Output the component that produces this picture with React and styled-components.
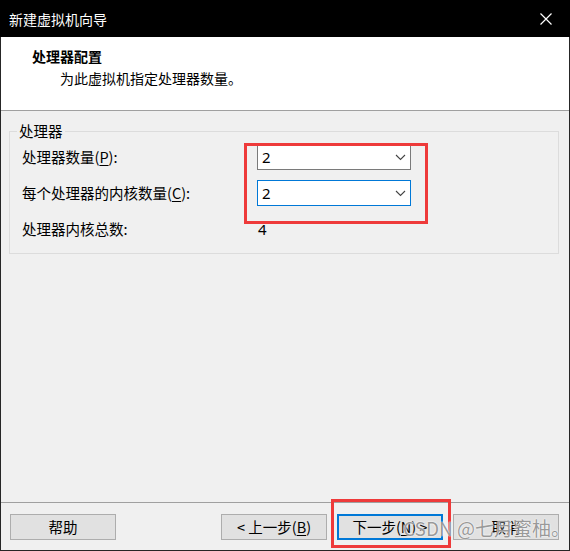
import styled, { createGlobalStyle } from "styled-components";

const GlobalStyle = createGlobalStyle`
  html, body {
    margin: 0;
    padding: 0;
    background: #ffffff;
  }
  * {
    box-sizing: border-box;
  }
`;

const Chevron = () => (
  <svg width="11" height="7" viewBox="0 0 11 7">
    <polyline points="1,1 5.5,5.5 10,1" fill="none" stroke="#444" strokeWidth="1.1" />
  </svg>
);

const CloseIcon = () => (
  <svg width="12" height="12" viewBox="0 0 12 12">
    <path d="M0.5 0.5 L11.5 11.5 M11.5 0.5 L0.5 11.5" stroke="#fff" strokeWidth="1.2" />
  </svg>
);

const Combo = ({ value, focused }) => (
  <ComboBox focused={focused}>
    <span>{value}</span>
    <Chevron />
  </ComboBox>
);

const App = () => {
  return (
    <Frame>
      <GlobalStyle />
      <TitleBar>
        <span>新建虚拟机向导</span>
        <CloseButton>
          <CloseIcon />
        </CloseButton>
      </TitleBar>
      <Header>
        <HeaderTitle>处理器配置</HeaderTitle>
        <HeaderSub>为此虚拟机指定处理器数量。</HeaderSub>
      </Header>
      <Content>
        <GroupBox>
          <legend>处理器</legend>
          <Grid>
            <Label>处理器数量(<u>P</u>):</Label>
            <Combo value="2" />
            <Label>每个处理器的内核数量(<u>C</u>):</Label>
            <Combo value="2" focused />
            <Label>处理器内核总数:</Label>
            <Value>4</Value>
          </Grid>
          <Highlight />
        </GroupBox>
      </Content>
      <Footer>
        <Button>帮助</Button>
        <Spacer />
        <Button>&lt; 上一步(<u>B</u>)</Button>
        <NextWrap>
          <Button primary>下一步(<u>N</u>) &gt;</Button>
          <HighlightNext />
        </NextWrap>
        <Button>取消</Button>
        <Watermark>CSDN @七月蜜柚。</Watermark>
      </Footer>
    </Frame>
  );
};

const Frame = styled.div`
  width: 570px;
  height: 551px;
  border: 1px solid #262626;
  border-top: none;
  display: flex;
  flex-direction: column;
  background: #f0f0f0;
  font-family: "Noto Sans CJK SC", "Noto Sans", sans-serif;
  color: #000;
`;

const TitleBar = styled.div`
  height: 37px;
  margin: 0 -1px;
  background: #000;
  color: #fff;
  display: flex;
  align-items: center;
  justify-content: space-between;
  padding: 0 0 0 9px;
  font-size: 14px;
  line-height: 18px;
`;

const CloseButton = styled.div`
  width: 46px;
  height: 37px;
  display: flex;
  align-items: center;
  justify-content: center;
  margin-right: 1px;
`;

const Header = styled.div`
  height: 74px;
  background: #fff;
  border-bottom: 1px solid #a0a0a0;
  padding: 10px 0 0 31px;
`;

const HeaderTitle = styled.div`
  font-size: 14px;
  font-weight: bold;
  line-height: 18px;
`;

const HeaderSub = styled.div`
  font-size: 14px;
  line-height: 18px;
  margin-top: 4px;
  padding-left: 28px;
`;

const Content = styled.div`
  flex: 1;
  padding: 11px 10px 0 8px;
`;

const GroupBox = styled.fieldset`
  position: relative;
  margin: 0;
  border: 1px solid #dcdcdc;
  padding: 4px 12px 11px 12px;
  & legend {
    font-size: 14.5px;
    line-height: 18px;
    padding: 0 2px;
    margin-left: -5px;
  }
`;

const Grid = styled.div`
  display: grid;
  grid-template-columns: 235px 154px;
  grid-auto-rows: 26px;
  row-gap: 10px;
  align-items: center;
`;

const Label = styled.div`
  font-size: 14.5px;
  line-height: 18px;
  white-space: nowrap;
  & u {
    text-underline-offset: 2px;
  }
`;

const ComboBox = styled.div`
  height: 26px;
  background: #fff;
  border: 1px solid ${(p) => (p.focused ? "#0078d7" : "#7a7a7a")};
  display: flex;
  align-items: center;
  justify-content: space-between;
  padding: 0 4px 0 4px;
  font-size: 15px;
  font-family: "Noto Sans", sans-serif;
`;

const Value = styled.div`
  font-size: 15px;
  font-family: "Noto Sans", sans-serif;
  padding-left: 1px;
`;

const Highlight = styled.div`
  position: absolute;
  left: 234px;
  top: 3px;
  width: 184px;
  height: 81px;
  border: 3px solid #ee3a3a;
  pointer-events: none;
`;

const Footer = styled.div`
  position: relative;
  height: 48px;
  border-top: 1px solid #a0a0a0;
  display: flex;
  align-items: flex-start;
  gap: 10px;
  padding: 11px 10px 0 9px;
`;

const Spacer = styled.div`
  flex: 1;
`;

const Button = styled.div`
  width: 106px;
  height: 26px;
  background: #e1e1e1;
  border: ${(p) => (p.primary ? "2px solid #0078d7" : "1px solid #adadad")};
  display: flex;
  align-items: center;
  justify-content: center;
  font-size: 14.5px;
  line-height: 18px;
  white-space: nowrap;
  & u {
    text-underline-offset: 2px;
  }
`;

const NextWrap = styled.div`
  position: relative;
`;

const HighlightNext = styled.div`
  position: absolute;
  left: -6px;
  top: -15px;
  width: 120px;
  height: 49px;
  border: 3px solid #ee3a3a;
  pointer-events: none;
`;

const Watermark = styled.div`
  position: absolute;
  left: 402px;
  top: 13px;
  font-size: 19px;
  line-height: 24px;
  color: rgba(120, 120, 120, 0.75);
  text-shadow: 0 0 2px #fff, 0 0 1px #fff;
  pointer-events: none;
  white-space: nowrap;
`;

export default App;
